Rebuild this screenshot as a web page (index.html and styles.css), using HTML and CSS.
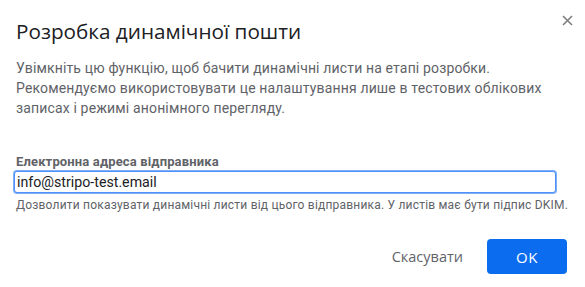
FILE: index.html
```html
<!DOCTYPE html>
<html lang="uk">
<head>
<meta charset="utf-8">
<link rel="stylesheet" href="styles.css">
</head>
<body>
<div class="dialog">
  <div class="header">
    <h1 class="title">Розробка динамічної пошти</h1>
    <button class="close" aria-label="Закрити">
      <svg width="11" height="11" viewBox="0 0 11 11"><path d="M1 1L10 10M10 1L1 10" stroke="#7a7a7a" stroke-width="1.5" fill="none"/></svg>
    </button>
  </div>
  <p class="desc">Увімкніть цю функцію, щоб бачити динамічні листи на етапі розробки. Рекомендуємо використовувати це налаштування лише в тестових облікових записах і режимі анонімного перегляду.</p>
  <label class="label" for="sender">Електронна адреса відправника</label>
  <input id="sender" class="input" type="text" value="info@stripo-test.email">
  <p class="hint">Дозволити показувати динамічні листи від цього відправника. У листів має бути підпис DKIM.</p>
  <div class="actions">
    <button class="btn-text">Скасувати</button>
    <button class="btn-ok">OK</button>
  </div>
</div>
</body>
</html>
```
FILE: styles.css
```css
html, body {
  margin: 0;
  padding: 0;
  background: #fff;
}
.dialog {
  width: 585px;
  height: 287px;
  box-sizing: border-box;
  padding: 0 18px 0 16px;
  font-family: Roboto, "Noto Sans", sans-serif;
}
.header {
  display: flex;
  justify-content: space-between;
  align-items: flex-start;
  height: 58px;
}
.title {
  margin: 17px 0 0;
  font-family: "Open Sans", sans-serif;
  font-weight: 400;
  font-size: 20.7px;
  line-height: 28px;
  color: #202124;
}
.close {
  margin: 15px -6px 0 0;
  padding: 0;
  width: 11px;
  height: 11px;
  border: 0;
  background: none;
  display: flex;
}
.desc {
  margin: 0;
  font-size: 14px;
  line-height: 20px;
  color: #5f6368;
  letter-spacing: 0.15px;
}
.label {
  display: block;
  margin-top: 36px;
  font-size: 13px;
  line-height: 16px;
  font-weight: 700;
  color: #5f6368;
  letter-spacing: 0.15px;
}
.input {
  display: block;
  margin: 1px 0 0 -2px;
  box-sizing: border-box;
  width: 542px;
  height: 22px;
  padding: 0 2px;
  border: 1px solid #4d90fe;
  border-radius: 3px;
  box-shadow: 0 0 0 1px #7fb0f7;
  outline: none;
  font-family: Roboto, sans-serif;
  font-size: 14.2px;
  color: #202124;
}
.hint {
  margin: 4px 0 0;
  font-size: 12px;
  line-height: 16px;
  color: #5f6368;
  letter-spacing: 0.2px;
  white-space: nowrap;
}
.actions {
  display: flex;
  justify-content: flex-end;
  align-items: center;
  gap: 24px;
  margin-top: 26px;
}
.btn-text {
  border: 0;
  background: none;
  padding: 0;
  font-family: "Open Sans", sans-serif;
  font-size: 14.5px;
  color: #5f6368;
}
.btn-ok {
  width: 80px;
  height: 35px;
  border: 0;
  border-radius: 4px;
  background: #0b6cf0;
  color: #fff;
  font-family: "Open Sans", sans-serif;
  font-size: 15px;
  font-weight: 500;
  letter-spacing: 0.5px;
}
```
